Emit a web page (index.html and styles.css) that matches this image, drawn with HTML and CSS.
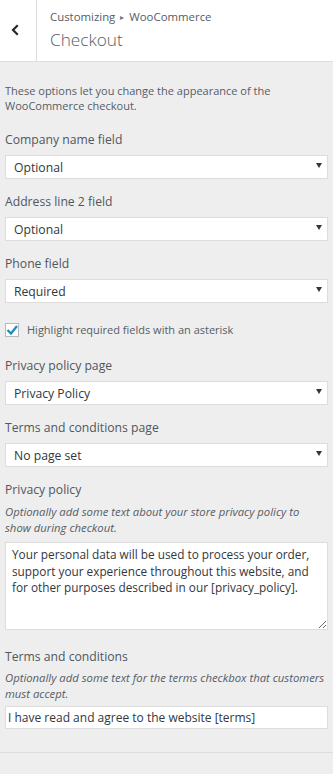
FILE: index.html
```html
<!DOCTYPE html>
<html lang="en">
<head>
<meta charset="utf-8">
<title>Customizing WooCommerce – Checkout</title>
<link rel="stylesheet" href="styles.css">
</head>
<body>
<div class="panel">
  <header class="head">
    <button class="back" type="button" aria-label="Back">
      <svg width="10" height="12" viewBox="0 0 10 12"><polyline points="7,2 3,6 7,10" fill="none" stroke="#23282d" stroke-width="2.2" stroke-linecap="square"/></svg>
    </button>
    <div class="title">
      <span class="crumb">Customizing <span class="sep">▸</span> WooCommerce</span>
      <h1 class="name">Checkout</h1>
    </div>
  </header>

  <main class="controls">
    <p class="intro">These options let you change the appearance of the WooCommerce checkout.</p>

    <div class="control">
      <label class="ctitle">Company name field</label>
      <div class="sel">
        <select><option>Optional</option></select>
        <svg class="arrow" width="6" height="5" viewBox="0 0 6 5"><polygon points="0,0 6,0 3,5" fill="#32373c"/></svg>
      </div>
    </div>

    <div class="control">
      <label class="ctitle">Address line 2 field</label>
      <div class="sel">
        <select><option>Optional</option></select>
        <svg class="arrow" width="6" height="5" viewBox="0 0 6 5"><polygon points="0,0 6,0 3,5" fill="#32373c"/></svg>
      </div>
    </div>

    <div class="control">
      <label class="ctitle">Phone field</label>
      <div class="sel">
        <select><option>Required</option></select>
        <svg class="arrow" width="6" height="5" viewBox="0 0 6 5"><polygon points="0,0 6,0 3,5" fill="#32373c"/></svg>
      </div>
    </div>

    <div class="control checkrow">
      <span class="box">
        <svg width="14" height="14" viewBox="0 0 14 14"><rect x="0.5" y="0.5" width="13" height="13" fill="#fff" stroke="#b4b9be"/><polyline points="2.5,7 6,10.5 12,3" fill="none" stroke="#1e8cbe" stroke-width="2.3"/></svg>
      </span>
      <span class="checklabel">Highlight required fields with an asterisk</span>
    </div>

    <div class="control">
      <label class="ctitle">Privacy policy page</label>
      <div class="sel">
        <select><option>Privacy Policy</option></select>
        <svg class="arrow" width="6" height="5" viewBox="0 0 6 5"><polygon points="0,0 6,0 3,5" fill="#32373c"/></svg>
      </div>
    </div>

    <div class="control">
      <label class="ctitle">Terms and conditions page</label>
      <div class="sel">
        <select><option>No page set</option></select>
        <svg class="arrow" width="6" height="5" viewBox="0 0 6 5"><polygon points="0,0 6,0 3,5" fill="#32373c"/></svg>
      </div>
    </div>

    <div class="control described big">
      <label class="ctitle">Privacy policy</label>
      <p class="cdesc">Optionally add some text about your store privacy policy to show during checkout.</p>
      <textarea class="ta">Your personal data will be used to process your order, support your experience throughout this website, and for other purposes described in our [privacy_policy].</textarea>
    </div>

    <div class="control described last">
      <label class="ctitle">Terms and conditions</label>
      <p class="cdesc">Optionally add some text for the terms checkbox that customers must accept.</p>
      <input class="txt" type="text" value="I have read and agree to the website [terms]">
    </div>
  </main>

  <footer class="foot"></footer>
</div>
</body>
</html>
```

FILE: styles.css
```css
* { box-sizing: border-box; }

html, body {
  margin: 0;
  height: 100%;
}

body {
  background: #eee;
  font-family: "Open Sans", "Noto Sans", sans-serif;
  color: #555d66;
}

.panel {
  display: flex;
  flex-direction: column;
  min-height: 100%;
}

.head {
  display: flex;
  height: 62px;
  background: #fff;
  border-bottom: 1px solid #ddd;
}

.back {
  width: 37px;
  height: 100%;
  padding: 0 0 0 10px;
  margin: 0;
  border: 0;
  border-right: 1px solid #ddd;
  background: #fff;
  display: flex;
  align-items: center;
  justify-content: flex-start;
}

.back svg { display: block; margin-top: -1px; }

.title {
  display: flex;
  flex-direction: column;
  padding: 9px 0 0 13px;
}

.crumb {
  font-size: 11.4px;
  line-height: 16px;
  color: #555d66;
}

.sep { font-size: 8px; vertical-align: 1px; padding: 0 2px; color: #72777c; }

.name {
  margin: 3px 0 0;
  font-size: 17.2px;
  line-height: 24px;
  font-weight: 300;
  color: #555d66;
}

.controls {
  padding: 21px 5px 0;
}

.intro {
  margin: 0 0 18px;
  font-size: 11px;
  line-height: 15px;
}

.control {
  display: flex;
  flex-direction: column;
  gap: 6px;
  margin-bottom: 14px;
}

.ctitle {
  font-size: 12.2px;
  line-height: 18px;
  color: #50575e;
}

.sel { position: relative; }

.sel select {
  appearance: none;
  -webkit-appearance: none;
  display: block;
  width: 100%;
  height: 24px;
  margin: 0;
  padding: 0 24px 0 8px;
  border: 1px solid #ddd;
  border-radius: 0;
  background: #fff;
  font-family: inherit;
  font-size: 12.2px;
  color: #32373c;
}

.arrow {
  position: absolute;
  right: 6px;
  top: 8px;
  pointer-events: none;
}

.checkrow {
  flex-direction: row;
  align-items: center;
  gap: 8px;
  height: 18px;
  margin-top: 18px;
  margin-bottom: 18px;
}

.box { display: block; width: 14px; height: 14px; }
.box svg { display: block; }

.checklabel {
  font-size: 11px;
  line-height: 18px;
}

.described { gap: 0; }

.cdesc {
  margin: 4px 0 4px;
  font-size: 11.3px;
  line-height: 16px;
  font-style: italic;
}

.big { margin-bottom: 18px; }
.big .cdesc { margin: 5px 0 6px; }

.ta {
  display: block;
  width: 100%;
  height: 88px;
  margin: 0;
  padding: 3px 10px 3px 6px;
  border: 1px solid #ddd;
  border-radius: 0;
  background: #fff;
  font-family: inherit;
  font-size: 11.8px;
  line-height: 16.7px;
  color: #32373c;
  resize: vertical;
}

.txt {
  display: block;
  width: 100%;
  height: 23px;
  margin: 0;
  padding: 0 2px;
  border: 1px solid #ddd;
  border-radius: 0;
  background: #fff;
  font-family: inherit;
  font-size: 12px;
  color: #32373c;
}

.last { margin-bottom: 23px; }

.foot {
  flex: 1;
  border-top: 1px solid #ddd;
  background: #eee;
}
```
